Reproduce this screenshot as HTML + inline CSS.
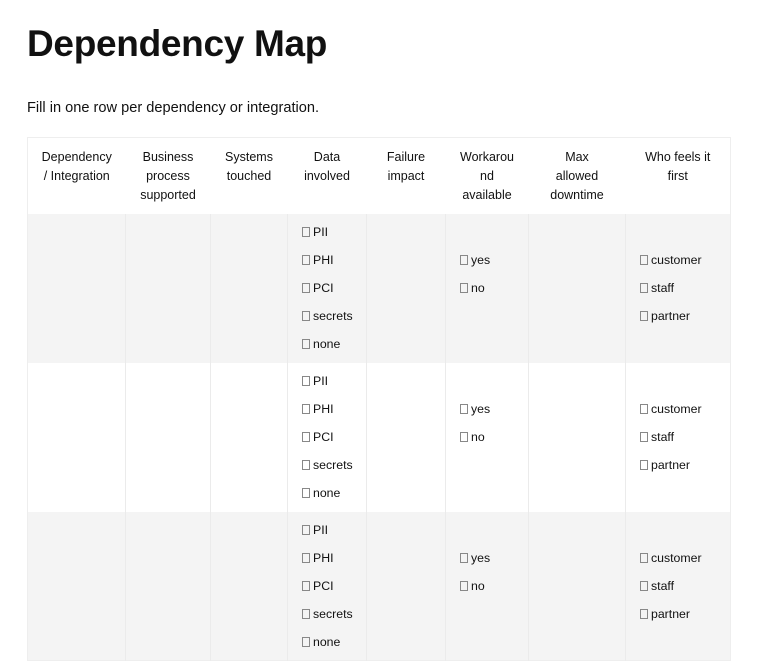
<!DOCTYPE html>
<html><head><meta charset="utf-8"><style>
html,body{margin:0;background:#fff;font-family:"Liberation Sans",sans-serif;color:#111;width:768px;height:538px;overflow:hidden}
h1{position:absolute;left:27px;top:23px;margin:0;font-size:37px;font-weight:bold;letter-spacing:-0.3px}
p.sub{position:absolute;left:27px;top:100px;margin:0;font-size:14.6px}
table{position:absolute;left:27px;top:137px;width:704px;border-collapse:collapse;font-size:12.3px;border:1px solid #eee}
th{font-weight:normal;height:76px;vertical-align:top;padding-top:10px;line-height:19px;text-align:center;box-sizing:border-box;font-size:12.5px}
td{vertical-align:top;height:149px;padding:0;border-left:1px solid #ebebeb;box-sizing:border-box}
td:first-child{border-left:none}
tr.g td{background:#f4f4f4}
.l{padding-left:14px;padding-top:4px;line-height:28px}
.b{display:inline-block;width:6px;height:8px;border:1px solid #888;margin-right:3px;vertical-align:-1px;font-size:6px}
</style></head><body>
<h1>Dependency Map</h1>
<p class="sub">Fill in one row per dependency or integration.</p>
<table>
<tr><th style="width:98px">Dependency<br>/ Integration</th><th style="width:85px">Business<br>process<br>supported</th><th style="width:77px">Systems<br>touched</th><th style="width:79px">Data<br>involved</th><th style="width:79px">Failure<br>impact</th><th style="width:83px">Workarou<br>nd<br>available</th><th style="width:97px">Max<br>allowed<br>downtime</th><th>Who feels it<br>first</th></tr>
<tr class="g"><td></td><td></td><td></td><td class="l"><span class="b"></span>PII<br><span class="b"></span>PHI<br><span class="b"></span>PCI<br><span class="b"></span>secrets<br><span class="b"></span>none</td><td></td><td class="l"><br><span class="b"></span>yes<br><span class="b"></span>no</td><td></td><td class="l"><br><span class="b"></span>customer<br><span class="b"></span>staff<br><span class="b"></span>partner</td></tr>
<tr><td></td><td></td><td></td><td class="l"><span class="b"></span>PII<br><span class="b"></span>PHI<br><span class="b"></span>PCI<br><span class="b"></span>secrets<br><span class="b"></span>none</td><td></td><td class="l"><br><span class="b"></span>yes<br><span class="b"></span>no</td><td></td><td class="l"><br><span class="b"></span>customer<br><span class="b"></span>staff<br><span class="b"></span>partner</td></tr>
<tr class="g"><td></td><td></td><td></td><td class="l"><span class="b"></span>PII<br><span class="b"></span>PHI<br><span class="b"></span>PCI<br><span class="b"></span>secrets<br><span class="b"></span>none</td><td></td><td class="l"><br><span class="b"></span>yes<br><span class="b"></span>no</td><td></td><td class="l"><br><span class="b"></span>customer<br><span class="b"></span>staff<br><span class="b"></span>partner</td></tr>
</table>
</body></html>
